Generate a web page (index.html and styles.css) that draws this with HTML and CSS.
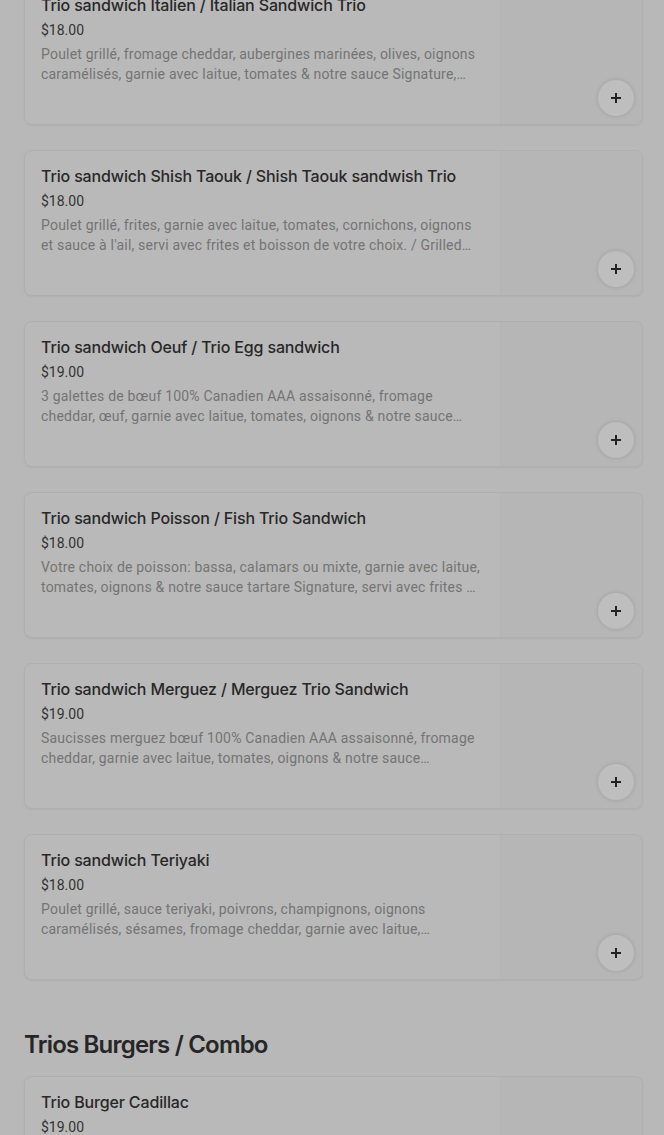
FILE: index.html
```html
<!DOCTYPE html>
<html lang="fr">
<head>
<meta charset="utf-8">
<title>Menu</title>
<link rel="stylesheet" href="styles.css">
</head>
<body>
<main class="menu">
  <ul class="items">
    <li class="card">
      <div class="info">
        <h3 class="title">Trio sandwich Italien / Italian Sandwich Trio</h3>
        <div class="price">$18.00</div>
        <p class="desc">Poulet grillé, fromage cheddar, aubergines marinées, olives, oignons caramélisés, garnie avec laitue, tomates &amp; notre sauce Signature,…</p>
      </div>
      <div class="media"><button class="add" aria-label="Ajouter"><svg viewBox="0 0 12 12" width="12" height="12"><path d="M6 1v10M1 6h10" stroke="#222" stroke-width="2"/></svg></button></div>
    </li>
    <li class="card">
      <div class="info">
        <h3 class="title">Trio sandwich Shish Taouk / Shish Taouk sandwish Trio</h3>
        <div class="price">$18.00</div>
        <p class="desc">Poulet grillé, frites, garnie avec laitue, tomates, cornichons, oignons et sauce à l'ail, servi avec frites et boisson de votre choix. / Grilled…</p>
      </div>
      <div class="media"><button class="add" aria-label="Ajouter"><svg viewBox="0 0 12 12" width="12" height="12"><path d="M6 1v10M1 6h10" stroke="#222" stroke-width="2"/></svg></button></div>
    </li>
    <li class="card">
      <div class="info">
        <h3 class="title">Trio sandwich Oeuf / Trio Egg sandwich</h3>
        <div class="price">$19.00</div>
        <p class="desc">3 galettes de bœuf 100% Canadien AAA assaisonné, fromage cheddar, œuf, garnie avec laitue, tomates, oignons &amp; notre sauce…</p>
      </div>
      <div class="media"><button class="add" aria-label="Ajouter"><svg viewBox="0 0 12 12" width="12" height="12"><path d="M6 1v10M1 6h10" stroke="#222" stroke-width="2"/></svg></button></div>
    </li>
    <li class="card">
      <div class="info">
        <h3 class="title">Trio sandwich Poisson / Fish Trio Sandwich</h3>
        <div class="price">$18.00</div>
        <p class="desc">Votre choix de poisson: bassa, calamars ou mixte, garnie avec laitue, tomates, oignons &amp; notre sauce tartare Signature, servi avec frites&nbsp;…</p>
      </div>
      <div class="media"><button class="add" aria-label="Ajouter"><svg viewBox="0 0 12 12" width="12" height="12"><path d="M6 1v10M1 6h10" stroke="#222" stroke-width="2"/></svg></button></div>
    </li>
    <li class="card">
      <div class="info">
        <h3 class="title">Trio sandwich Merguez / Merguez Trio Sandwich</h3>
        <div class="price">$19.00</div>
        <p class="desc">Saucisses merguez bœuf 100% Canadien AAA assaisonné, fromage cheddar, garnie avec laitue, tomates, oignons &amp; notre sauce…</p>
      </div>
      <div class="media"><button class="add" aria-label="Ajouter"><svg viewBox="0 0 12 12" width="12" height="12"><path d="M6 1v10M1 6h10" stroke="#222" stroke-width="2"/></svg></button></div>
    </li>
    <li class="card">
      <div class="info">
        <h3 class="title">Trio sandwich Teriyaki</h3>
        <div class="price">$18.00</div>
        <p class="desc">Poulet grillé, sauce teriyaki, poivrons, champignons, oignons caramélisés, sésames, fromage cheddar, garnie avec laitue,…</p>
      </div>
      <div class="media"><button class="add" aria-label="Ajouter"><svg viewBox="0 0 12 12" width="12" height="12"><path d="M6 1v10M1 6h10" stroke="#222" stroke-width="2"/></svg></button></div>
    </li>
  </ul>
  <h2 class="section">Trios Burgers / Combo</h2>
  <ul class="items">
    <li class="card">
      <div class="info">
        <h3 class="title">Trio Burger Cadillac</h3>
        <div class="price">$19.00</div>
        <p class="desc">Galette de bœuf 100% Canadien AAA, fromage cheddar, bacon, garnie avec laitue, tomates, oignons &amp; notre sauce Signature.</p>
      </div>
      <div class="media"><button class="add" aria-label="Ajouter"><svg viewBox="0 0 12 12" width="12" height="12"><path d="M6 1v10M1 6h10" stroke="#222" stroke-width="2"/></svg></button></div>
    </li>
  </ul>
</main>
</body>
</html>
```
FILE: styles.css
```css
html, body {
  margin: 0;
  padding: 0;
  background: #b8b8b8;
}
body {
  font-family: "Inter", "Roboto", sans-serif;
  color: #262626;
  overflow: hidden;
}
.menu {
  padding: 0 21px 0 24px;
  margin-top: -21px;
}
.items {
  list-style: none;
  margin: 0;
  padding: 0;
  display: flex;
  flex-direction: column;
  gap: 25px;
}
.card {
  display: flex;
  height: 146px;
  box-sizing: border-box;
  border: 1px solid #afafaf;
  border-radius: 8px;
  background: #b9b9b9;
  box-shadow: 0 1px 2px rgba(0,0,0,0.05);
  overflow: hidden;
}
.info {
  flex: 1;
  min-width: 0;
  padding: 15px 16px 0 16px;
}
.title {
  margin: 0;
  font-size: 16px;
  font-weight: 500;
  line-height: 20px;
  letter-spacing: -0.15px;
  color: #282828;
}
.price {
  margin-top: 5px;
  font-family: "Roboto", sans-serif;
  font-size: 14px;
  line-height: 20px;
  color: #333333;
}
.desc {
  margin: 4px 0 0;
  font-family: "Roboto", sans-serif;
  font-size: 14px;
  line-height: 20px;
  letter-spacing: 0.2px;
  color: #747474;
  display: -webkit-box;
  -webkit-box-orient: vertical;
  -webkit-line-clamp: 2;
  overflow: hidden;
}
.media {
  width: 141px;
  flex: none;
  position: relative;
  background: #b6b6b6;
  border-left: 1px solid #b3b3b3;
}
.add {
  position: absolute;
  right: 8px;
  bottom: 8px;
  width: 36px;
  height: 36px;
  border-radius: 50%;
  border: none;
  padding: 0;
  background: #bebebe;
  box-shadow: 0 0 4px rgba(0,0,0,0.14);
  display: flex;
  align-items: center;
  justify-content: center;
}
.section {
  margin: 51px 0 0;
  height: 45px;
  font-size: 24px;
  font-weight: 600;
  line-height: 28px;
  letter-spacing: -0.8px;
  color: #262626;
}
```
